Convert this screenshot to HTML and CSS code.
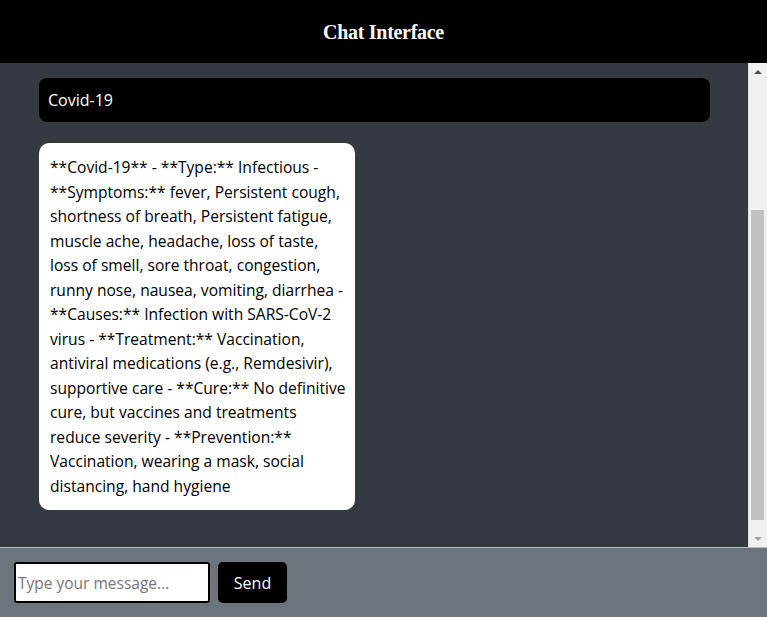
FILE: index.html
```html
<!DOCTYPE html>
<html lang="en">
<head>
<meta charset="utf-8">
<title>Chat Interface</title>
<link rel="stylesheet" href="styles.css">
</head>
<body>
<div class="app">
  <header class="header">
    <h1 class="title">Chat Interface</h1>
  </header>
  <section class="chat">
    <div class="messages">
      <div class="msg msg-user">Covid-19</div>
      <div class="msg msg-bot">**Covid-19** - **Type:** Infectious -<br>**Symptoms:** fever, Persistent cough,<br>shortness of breath, Persistent fatigue,<br>muscle ache, headache, loss of taste,<br>loss of smell, sore throat, congestion,<br>runny nose, nausea, vomiting, diarrhea -<br>**Causes:** Infection with SARS-CoV-2<br>virus - **Treatment:** Vaccination,<br>antiviral medications (e.g., Remdesivir),<br>supportive care - **Cure:** No definitive<br>cure, but vaccines and treatments<br>reduce severity - **Prevention:**<br>Vaccination, wearing a mask, social<br>distancing, hand hygiene</div>
    </div>
    <div class="scrollbar" aria-hidden="true">
      <div class="sb-btn sb-up"><span class="tri tri-up"></span></div>
      <div class="sb-track">
        <div class="sb-gap-top"></div>
        <div class="sb-thumb"></div>
      </div>
      <div class="sb-btn sb-down"><span class="tri tri-down"></span></div>
    </div>
  </section>
  <footer class="composer">
    <input class="input" type="text" placeholder="Type your message..." autofocus>
    <button class="send" type="button">Send</button>
  </footer>
</div>
</body>
</html>
```
FILE: styles.css
```css
* { box-sizing: border-box; }
html, body { margin: 0; padding: 0; height: 100%; }
body {
  font-family: "Open Sans", "Noto Sans", sans-serif;
  background: #343a40;
}
.app {
  display: flex;
  flex-direction: column;
  height: 617px;
}
.header {
  flex: 0 0 63px;
  background: #000;
  display: flex;
  align-items: center;
  justify-content: center;
}
.title {
  margin: 0;
  color: #fff;
  font-family: "Liberation Serif", "DejaVu Serif", serif;
  font-weight: bold;
  font-size: 20px;
  letter-spacing: -0.3px;
  transform: scaleY(1.08);
}
.chat {
  flex: 1 1 auto;
  min-height: 0;
  background: #343a40;
  display: flex;
  overflow: hidden;
}
.messages {
  flex: 1 1 auto;
  display: flex;
  flex-direction: column;
  align-items: flex-start;
  gap: 21px;
  padding: 15px 38px 0 39px;
}
.msg {
  font-size: 16px;
  line-height: 24px;
}
.msg-user {
  align-self: stretch;
  background: #000;
  color: #fff;
  border-radius: 8px;
  padding: 10px 9px;
}
.msg-bot {
  width: 316px;
  background: #fff;
  color: #000;
  border-radius: 10px;
  padding: 12px 10px 12px 11px;
  font-size: 15.6px;
  line-height: 24.5px;
  white-space: nowrap;
}
.scrollbar {
  flex: 0 0 19px;
  background: #f1f1f1;
  display: flex;
  flex-direction: column;
  border-left: 1px solid #e2e2e2;
}
.sb-btn {
  flex: 0 0 17px;
  display: flex;
  align-items: center;
  justify-content: center;
}
.tri {
  width: 0;
  height: 0;
  border-left: 4px solid transparent;
  border-right: 4px solid transparent;
}
.tri-up { border-bottom: 4px solid #505050; }
.tri-down { border-top: 4px solid #a3a3a3; }
.sb-track {
  flex: 1 1 auto;
  display: flex;
  flex-direction: column;
  padding: 0 3px 10px 2px;
}
.sb-gap-top { flex: 0 0 130px; }
.sb-thumb {
  flex: 1 1 auto;
  background: #c1c1c1;
}
.composer {
  flex: 0 0 70px;
  background: #6c757d;
  border-top: 1px solid #b5bcc2;
  display: flex;
  align-items: flex-start;
  gap: 8px;
  padding: 14px 14px 0 14px;
}
.input {
  width: 196px;
  height: 41px;
  border: 2px solid #000;
  border-radius: 3px;
  background: #fff;
  font-family: "Open Sans", "Noto Sans", sans-serif;
  font-size: 15.5px;
  padding: 0 2px;
  color: #000;
  outline: 1px solid #fff;
  outline-offset: -3px;
}
.input::placeholder { color: #767676; }
.send {
  width: 69px;
  height: 41px;
  background: #000;
  color: #fff;
  border: none;
  border-radius: 5px;
  font-family: "Open Sans", "Noto Sans", sans-serif;
  font-size: 16px;
  cursor: pointer;
}
```
